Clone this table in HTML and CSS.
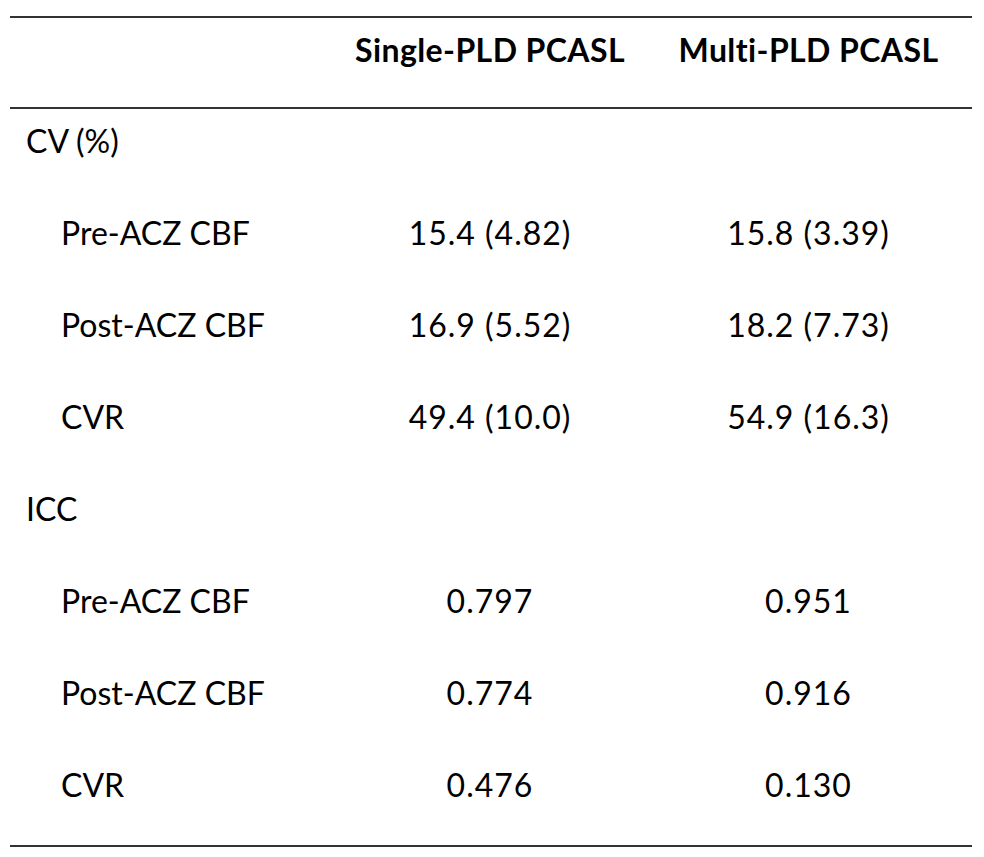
FILE: index.html
```html
<!DOCTYPE html>
<html lang="en">
<head>
<meta charset="utf-8">
<title>CV and ICC table</title>
<link rel="stylesheet" href="styles.css">
</head>
<body>
<div class="page">
  <table class="stats">
    <colgroup>
      <col class="c-label">
      <col class="c-single">
      <col class="c-multi">
    </colgroup>
    <thead>
      <tr>
        <th class="label"></th>
        <th>Single-PLD PCASL</th>
        <th>Multi-PLD PCASL</th>
      </tr>
    </thead>
    <tbody>
      <tr><td class="label group">CV (%)</td><td></td><td></td></tr>
      <tr><td class="label sub">Pre-ACZ CBF</td><td class="num">15.4 (4.82)</td><td class="num">15.8 (3.39)</td></tr>
      <tr><td class="label sub">Post-ACZ CBF</td><td class="num">16.9 (5.52)</td><td class="num">18.2 (7.73)</td></tr>
      <tr><td class="label sub">CVR</td><td class="num">49.4 (10.0)</td><td class="num">54.9 (16.3)</td></tr>
      <tr><td class="label group">ICC</td><td></td><td></td></tr>
      <tr><td class="label sub">Pre-ACZ CBF</td><td class="num">0.797</td><td class="num">0.951</td></tr>
      <tr><td class="label sub">Post-ACZ CBF</td><td class="num">0.774</td><td class="num">0.916</td></tr>
      <tr><td class="label sub">CVR</td><td class="num">0.476</td><td class="num">0.130</td></tr>
    </tbody>
  </table>
</div>
</body>
</html>
```
FILE: styles.css
```css
html, body {
  margin: 0;
  padding: 0;
  background: #ffffff;
}
body {
  font-family: Lato, "Liberation Sans", sans-serif;
  color: #000000;
  font-variant-ligatures: none;
}
.page {
  padding: 16px 12px 0 10px;
}
.stats {
  width: 962px;
  border-collapse: collapse;
  table-layout: fixed;
  border-top: 2px solid #333333;
  border-bottom: 2px solid #333333;
}
.c-label { width: 325px; }
.c-single { width: 310px; }
.c-multi { width: 327px; }
.stats th,
.stats td {
  font-size: 32px;
  line-height: 36px;
  text-align: center;
  vertical-align: top;
  padding: 14px 0 0 0;
  height: 78px;
  box-sizing: content-box;
}
.stats th {
  font-weight: 700;
  height: 75px;
  letter-spacing: 0.4px;
  border-bottom: 2px solid #333333;
}
.stats td.label {
  text-align: left;
}
.stats td.group {
  padding-left: 16px;
}
.stats td.sub {
  padding-left: 51px;
}
.stats td.num {
  letter-spacing: 1px;
}
```
